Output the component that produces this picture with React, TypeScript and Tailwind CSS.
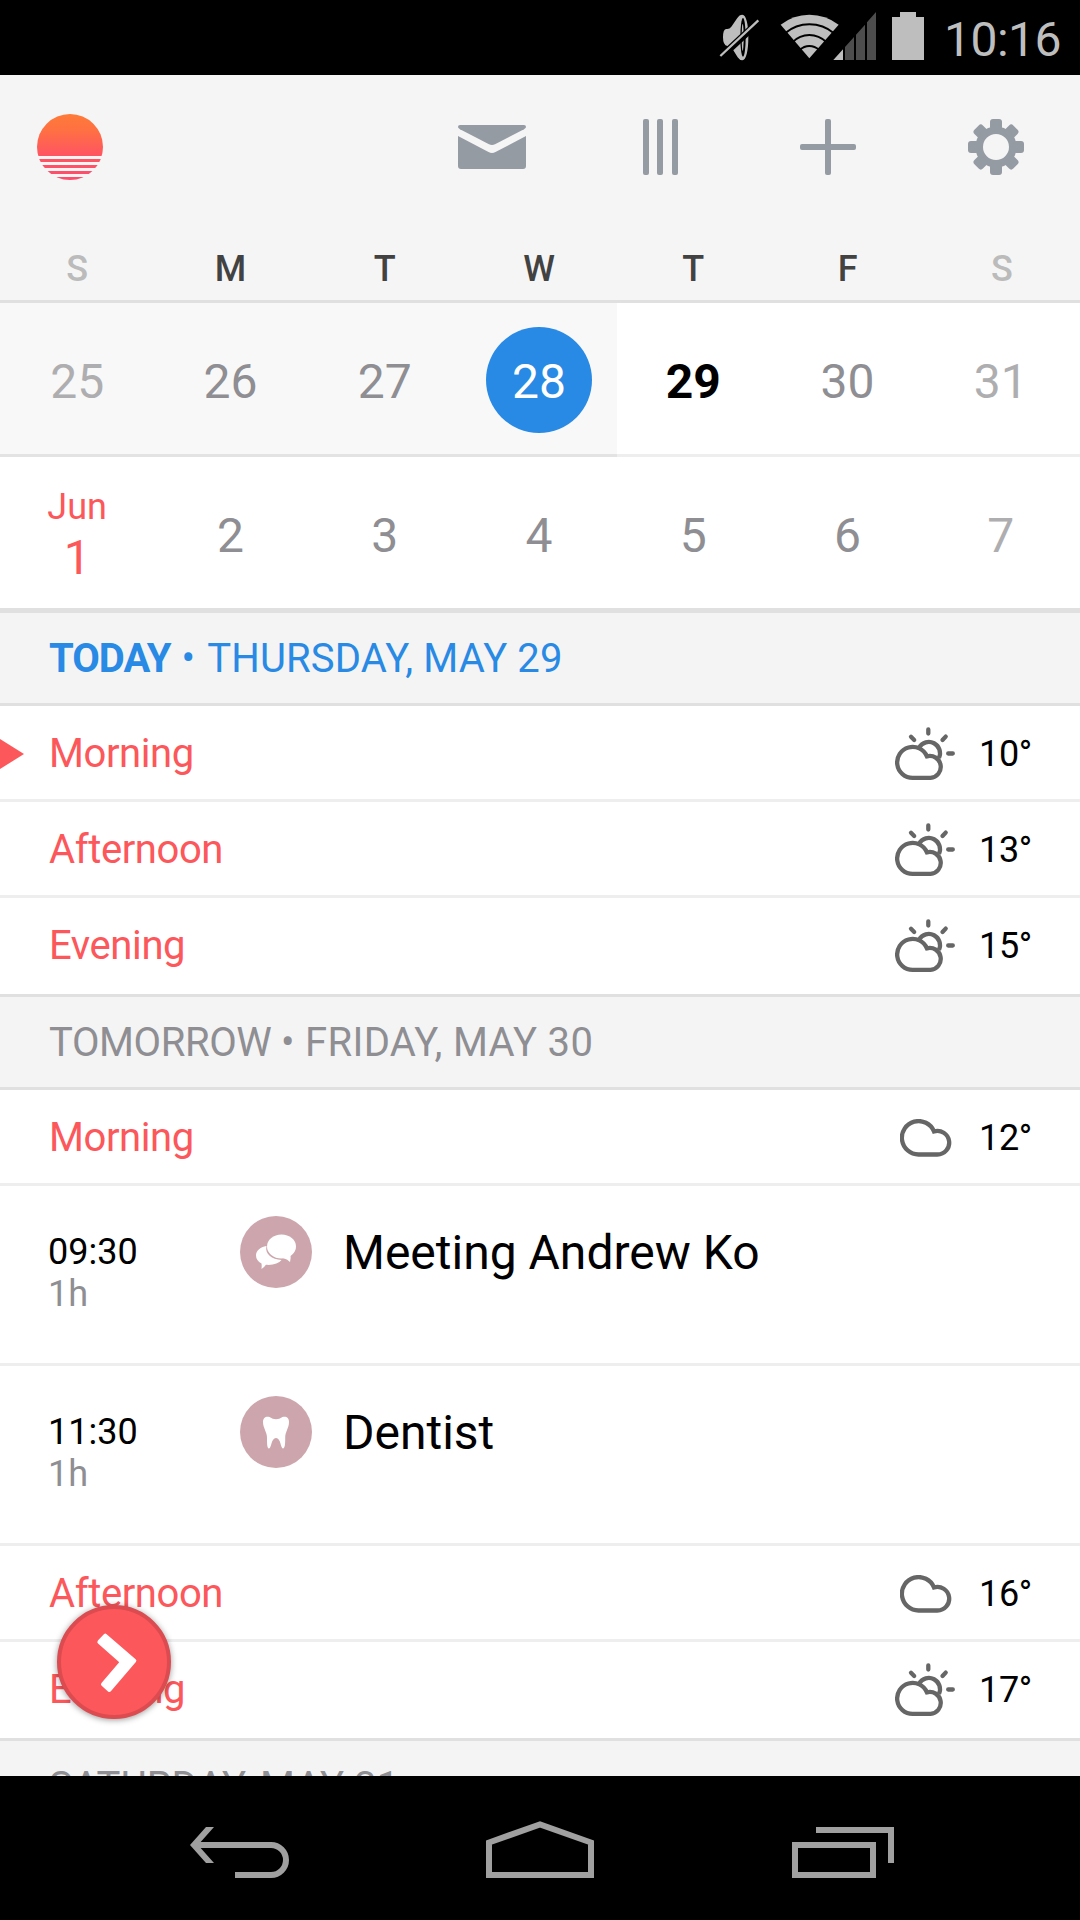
import clsx from 'clsx';
import type { ReactNode } from 'react';

type Weather = 'cloud' | 'partly';

interface DayCell {
  label: string;
  month?: string;
  past?: boolean;
  weekend?: boolean;
  selected?: boolean;
  today?: boolean;
}

const weekdays = ['S', 'M', 'T', 'W', 'T', 'F', 'S'];

const weeks: DayCell[][] = [
  [
    { label: '25', past: true, weekend: true },
    { label: '26', past: true },
    { label: '27', past: true },
    { label: '28', past: true, selected: true },
    { label: '29', today: true },
    { label: '30' },
    { label: '31', weekend: true },
  ],
  [
    { label: '1', month: 'Jun' },
    { label: '2' },
    { label: '3' },
    { label: '4' },
    { label: '5' },
    { label: '6' },
    { label: '7', weekend: true },
  ],
];

function MuteIcon() {
  return (
    <svg viewBox="54 36 126 150" className="h-[50px] w-[42px]">
      <path
        d="M69 112 Q69 88 78 87 Q88 89 94 80 L112 54 Q118 44 127 44 C139 44 145 75 145 112 C145 150 139 181 127 181 Q119 181 113 172 L98 148 L82 138 Q69 136 69 112Z"
        fill="#bebebe"
      />
      <ellipse cx="129" cy="112" rx="8" ry="58" fill="#000" />
      <ellipse cx="128" cy="112" rx="3" ry="40" fill="#bebebe" />
      <path d="M57 176 L180 62" stroke="#000" strokeWidth="21" />
      <path d="M61 168 L175 61" stroke="#bebebe" strokeWidth="7" />
    </svg>
  );
}

function WifiIcon() {
  return (
    <svg viewBox="240 36 180 150" className="h-[50px] w-[60px]">
      <path d="M328 175 L242 74 Q280 44 328 44 Q377 44 416 74Z" fill="#bebebe" />
      <g fill="none" stroke="#000" strokeWidth="6">
        <path d="M255 100 Q287 73 328 73 Q370 73 402 100" />
        <path d="M277 127 Q299 105 328 105 Q357 105 380 127" />
        <path d="M299 150 Q312 138 328 138 Q344 138 358 150" />
      </g>
    </svg>
  );
}

function SignalIcon() {
  return (
    <svg viewBox="399 36 132 150" className="-ml-[7px] h-[50px] w-[44px]">
      <path d="M400 180 L429 148 V180Z" fill="#bebebe" />
      <path
        d="M435 141 L462 111 V180 H435Z M468 104 L495 74 V180 H468Z M501 67 L528 36 V180 H501Z"
        fill="#4d4d4d"
      />
    </svg>
  );
}

function BatteryIcon() {
  return (
    <svg viewBox="0 0 32 50" className="ml-[15px] h-[50px] w-[32px]">
      <path d="M8 0 H24 V5 H32 V48 H0 V5 H8Z" fill="#bebebe" />
    </svg>
  );
}

function SunriseLogo() {
  return (
    <svg viewBox="0 0 66 66" className="h-[66px] w-[66px]">
      <defs>
        <linearGradient id="sun" x1="0" y1="0" x2="0" y2="1">
          <stop offset="0" stopColor="#ff7b38" />
          <stop offset="0.25" stopColor="#ff7042" />
          <stop offset="0.6" stopColor="#ff5660" />
          <stop offset="1" stopColor="#ff4b6e" />
        </linearGradient>
        <clipPath id="bands">
          <path d="M0 0H66V42H0Z M0 45H66V48H0Z M0 51H66V54H0Z M0 57H66V60H0Z M0 63H66V66H0Z" />
        </clipPath>
      </defs>
      <circle cx="33" cy="33" r="33" fill="url(#sun)" clipPath="url(#bands)" />
    </svg>
  );
}

function MailIcon() {
  return (
    <svg viewBox="0 0 68 44" className="h-[44px] w-[68px]" fill="#959ba3">
      <path d="M2 0 H66 Q68 0 68 2 Q68 3 66 4.200 L37 19.300 Q34 20.800 31 19.300 L2 4.200 Q0 3 0 2 Q0 0 2 0Z" />
      <path d="M0 11 L30.500 27 Q34 29 37.500 27 L68 11 V41 Q68 44 65 44 H3 Q0 44 0 41Z" />
    </svg>
  );
}

function ColumnsIcon() {
  return (
    <svg viewBox="0 0 35 56" className="ml-px h-[56px] w-[35px]" fill="#959ba3">
      <rect x="0" width="6" height="56" rx="2" />
      <rect x="14" width="6" height="56" rx="2" />
      <rect x="29" width="6" height="56" rx="2" />
    </svg>
  );
}

function PlusIcon() {
  return (
    <svg viewBox="0 0 56 56" className="h-[56px] w-[56px]" fill="#959ba3">
      <rect x="25" width="6" height="56" rx="2" />
      <rect y="25" width="56" height="6" rx="2" />
    </svg>
  );
}

function GearIcon() {
  return (
    <svg viewBox="-28 -28 56 56" className="h-[56px] w-[56px]" fill="#959ba3">
      <circle r="16.800" fill="none" stroke="#959ba3" strokeWidth="7.600" />
      {[0, 45, 90, 135, 180, 225, 270, 315].map((angle) => (
        <rect
          key={angle}
          x="-6"
          y={angle % 90 === 0 ? -28 : -27.5}
          width="12"
          height="11"
          rx="3"
          transform={`rotate(${angle})`}
        />
      ))}
    </svg>
  );
}

function WeatherIcon({ kind }: { kind: Weather }) {
  if (kind === 'cloud') {
    return (
      <svg
        viewBox="0 0 52 38"
        className="mr-[27px] h-[38px] w-[52px]"
        fill="none"
        stroke="#666"
        strokeWidth="4.300"
      >
        <path d="M18.800 35.500 A16.700 16.700 0 1 1 34 12.400 A11.800 11.800 0 1 1 37.400 35.500Z" />
      </svg>
    );
  }

  return (
    <svg
      viewBox="0 0 60 54"
      className="mr-[24px] h-[54px] w-[60px]"
      fill="none"
      stroke="#666"
      strokeWidth="4.300"
    >
      <path d="M17.650 50.900 A15.500 15.500 0 1 1 31.900 29.300 A11 11 0 1 1 35.500 50.900Z" />
      <path d="M24.200 20.400 A11.200 11.200 0 0 1 44 30.800" />
      <g strokeLinecap="round">
        <path d="M33.300 2.500 V6.500 M16 9.800 L19.200 13 M50.700 9.600 L47.500 13 M53.200 26.500 H57.800" />
      </g>
    </svg>
  );
}

function ChatIcon() {
  return (
    <svg viewBox="0 0 40 36" className="h-[36px] w-[40px]">
      <path
        d="M10.500 12 C4 13 0 17 0 21.500 C0 25 2 27.500 5.500 29.500 Q6 32.500 5.500 35 Q8.500 33 10 30.800 C17 31.500 23 29 25.500 26 C16 25.500 8.500 20 10.500 12Z"
        fill="#fff"
      />
      <ellipse cx="25.500" cy="12.500" rx="14.500" ry="12" fill="#fff" />
      <path d="M27 24 Q32 25.500 34 28 Q35 24 34.500 20Z" fill="#fff" />
    </svg>
  );
}

function ToothIcon() {
  return (
    <svg viewBox="0 0 26 33" className="h-[33px] w-[26px]">
      <path
        d="M0 6 C0 1 3.500 0 6.500 1 Q13 5.500 19.500 1 C23 0 26 1.500 26 6 C26 12 22 16 22.200 22 C22.300 27 22 32.500 20 32.500 C17.500 32.500 18 22 13 22 C8 22 8.500 32.500 6 32.500 C4 32.500 4 27 4 22 C4 16 0 12 0 6Z"
        fill="#fff"
      />
    </svg>
  );
}

function StatusBar() {
  return (
    <div className="flex h-[75px] shrink-0 justify-end bg-black pr-[19px] text-[#bebebe]">
      <div className="flex pt-3">
        <MuteIcon />
        <div className="ml-5 flex">
          <WifiIcon />
          <SignalIcon />
        </div>
        <BatteryIcon />
      </div>
      <span className="ml-5 pt-1 text-[48px] leading-[71px] tracking-[-0.5px]">10:16</span>
    </div>
  );
}

function Toolbar() {
  return (
    <div className="flex h-[144px] items-center justify-between pl-[37px]">
      <SunriseLogo />
      <div className="grid w-[672px] grid-cols-4 items-center justify-items-center">
        <MailIcon />
        <ColumnsIcon />
        <PlusIcon />
        <GearIcon />
      </div>
    </div>
  );
}

function Day({ day }: { day: DayCell }) {
  return (
    <div
      className={clsx(
        'flex h-[154px] justify-center border-b-[3px] pr-[2px] first:pr-0 last:pr-1',
        day.past ? 'border-[#e3e3e3] bg-[#f8f8f8]' : 'border-[#eee] bg-white',
      )}
    >
      {day.month ? (
        <div className="pt-[25px] text-center text-[#fc575b]">
          <div className="text-[36px] leading-[50px]">{day.month}</div>
          <div className="text-[48px] leading-[51px]">{day.label}</div>
        </div>
      ) : (
        <div
          className={clsx(
            'mt-6 flex h-[106px] w-[106px] items-center justify-center rounded-full pt-[3px] text-[48px]',
            day.selected && 'bg-[#288ae4] text-white',
            day.today && 'font-bold text-black',
            day.weekend && 'text-[#aeaeb0]',
            !day.selected && !day.today && !day.weekend && 'text-[#8e8e93]',
          )}
        >
          {day.label}
        </div>
      )}
    </div>
  );
}

function Calendar() {
  return (
    <div>
      <div className="grid grid-cols-7 border-b-[3px] border-[#e0e0e0] pt-5 text-center text-[36px] leading-[61px] font-medium">
        {weekdays.map((name, i) => (
          <span
            key={i}
            className={clsx(
              'pr-[2px] first:pr-0',
              i === 0 || i === 6 ? 'text-[#bbb]' : 'text-[#424242]',
            )}
          >
            {name}
          </span>
        ))}
      </div>
      {/* the thick rule below replaces the last week's own border */}
      <div className="h-[310px] overflow-hidden border-b-[5px] border-[#e0e0e0]">
        {weeks.map((week, i) => (
          <div key={i} className="grid grid-cols-7">
            {week.map((day) => (
              <Day key={day.label} day={day} />
            ))}
          </div>
        ))}
      </div>
    </div>
  );
}

function SectionHeader({ children, today }: { children: ReactNode; today?: boolean }) {
  return (
    <div
      className={clsx(
        'border-b-[3px] border-[#e0e0e0] bg-[#f4f4f4] pt-px pr-12 pl-[49px] text-[40px] leading-[89px] tracking-[0.15px] whitespace-nowrap',
        today ? 'text-[#288ae4]' : 'border-t-[3px] text-[#8e8e93]',
      )}
    >
      {children}
    </div>
  );
}

interface PeriodRowProps {
  name: string;
  temp: string;
  weather: Weather;
  now?: boolean;
  last?: boolean;
}

function PeriodRow({ name, temp, weather, now, last }: PeriodRowProps) {
  return (
    <div
      className={clsx(
        'relative flex h-[96px] items-center border-b-[3px] bg-white pt-[2px] pr-12 pl-[49px]',
        last ? 'border-white' : 'border-[#eee]',
      )}
    >
      {now && (
        <svg viewBox="0 0 24 30" className="absolute top-[33px] left-0 h-[30px] w-[24px]">
          <path d="M0 0 L24 15 L0 30Z" fill="#fc575b" />
        </svg>
      )}
      <span className="flex-1 text-[40px] tracking-[-0.4px] text-[#fc575b]">{name}</span>
      <WeatherIcon kind={weather} />
      <span className="w-[53px] text-right text-[36px] tracking-[-0.3px] text-black">{temp}</span>
    </div>
  );
}

interface EventRowProps {
  time: string;
  duration: string;
  title: string;
  icon: ReactNode;
}

function EventRow({ time, duration, title, icon }: EventRowProps) {
  return (
    <div className="flex h-[180px] border-b-[3px] border-[#eee] bg-white pl-12">
      <div className="w-[192px] pt-[45px] text-[36px] leading-[42px]">
        <div className="text-black">{time}</div>
        <div className="text-[#8e8e93]">{duration}</div>
      </div>
      <div className="mt-[30px] flex h-[72px] w-[72px] items-center justify-center rounded-full bg-[#cca6ac]">
        {icon}
      </div>
      <div className="mt-[30px] ml-[31px] pt-px text-[48px] leading-[72px] text-black">{title}</div>
    </div>
  );
}

function NextButton() {
  return (
    <button
      type="button"
      className="absolute top-[1605px] left-[57px] h-[114px] w-[114px] rounded-full border-4 border-[#db4b50] bg-[#fc575b] shadow-[0_1px_6px_rgba(0,0,0,0.4)]"
    >
      <svg viewBox="183 266 318 318" className="h-[106px] w-[106px]">
        <path
          d="M316 346 L403 421 L328 509 L309 492 L366 425 L298 365Z"
          fill="#fff"
          stroke="#fff"
          strokeWidth="12"
          strokeLinejoin="round"
        />
      </svg>
    </button>
  );
}

function NavigationBar() {
  return (
    <div className="z-10 flex h-[144px] shrink-0 items-start justify-between bg-black pt-[45px] pr-[186px] pl-[189px]">
      <svg viewBox="0 0 100 60" className="h-[60px] w-[100px]" fill="none" stroke="#a0a0a0" strokeWidth="6">
        <path d="M9 24 H82 A15 15 0 0 1 82 54 H46" />
        <path d="M1 24 L17 6 H25 L9 24 L25 42 H17Z" fill="#a0a0a0" stroke="none" />
      </svg>
      <svg viewBox="0 0 108 60" className="mr-px h-[60px] w-[108px]" fill="none" stroke="#a0a0a0" strokeWidth="6">
        <path d="M3 54 V21.500 L54 3.400 L105 21.500 V54Z" />
      </svg>
      <svg viewBox="0 0 102 60" className="h-[60px] w-[102px]" fill="none" stroke="#a0a0a0" strokeWidth="6">
        <path d="M3 24 H81 V54 H3Z M24 9 H99 V42" />
      </svg>
    </div>
  );
}

export default function App() {
  return (
    <div className="relative flex h-[1920px] w-[1080px] flex-col overflow-hidden bg-[#f5f5f5] font-['Roboto',sans-serif]">
      <StatusBar />
      <div className="h-[1701px] overflow-hidden">
        <Toolbar />
        <Calendar />

        <SectionHeader today>
          <b className="mr-px font-bold tracking-[-1px]">TODAY</b> •{' '}
          <span className="ml-[2px]">THURSDAY, MAY 29</span>
        </SectionHeader>
        <PeriodRow name="Morning" temp="10°" weather="partly" now />
        <PeriodRow name="Afternoon" temp="13°" weather="partly" />
        <PeriodRow name="Evening" temp="15°" weather="partly" last />

        <SectionHeader>
          <span className="tracking-[-0.4px]">TOMORROW •</span>{' '}
          <span className="ml-px tracking-[0.3px]">FRIDAY, MAY 30</span>
        </SectionHeader>
        <PeriodRow name="Morning" temp="12°" weather="cloud" />
        <EventRow time="09:30" duration="1h" title="Meeting Andrew Ko" icon={<ChatIcon />} />
        <EventRow time="11:30" duration="1h" title="Dentist" icon={<ToothIcon />} />
        <PeriodRow name="Afternoon" temp="16°" weather="cloud" />
        <PeriodRow name="Evening" temp="17°" weather="partly" last />

        <SectionHeader>SATURDAY, MAY 31</SectionHeader>
      </div>
      <NextButton />
      <NavigationBar />
    </div>
  );
}
